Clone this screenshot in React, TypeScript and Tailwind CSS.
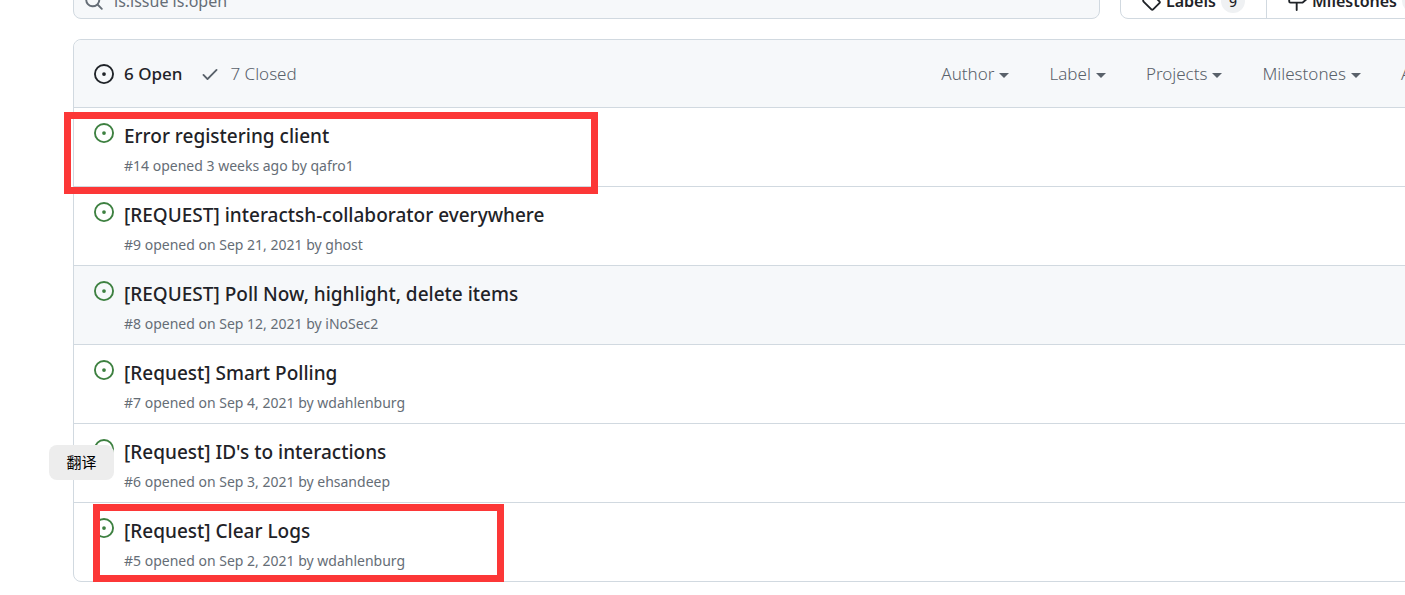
import React from 'react';

type IconProps = { path: string; className?: string };

const paths = {
  issue:
    'M8 9.5a1.5 1.5 0 1 0 0-3 1.5 1.5 0 0 0 0 3ZM8 0a8 8 0 1 1 0 16A8 8 0 0 1 8 0ZM1.5 8a6.5 6.5 0 1 0 13 0 6.5 6.5 0 0 0-13 0Z',
  check:
    'M13.78 4.22a.75.75 0 0 1 0 1.06l-7.25 7.25a.75.75 0 0 1-1.06 0L2.22 9.28a.751.751 0 0 1 .018-1.042.751.751 0 0 1 1.042-.018L6 10.94l6.72-6.72a.75.75 0 0 1 1.06 0Z',
  search:
    'M10.68 11.74a6 6 0 0 1-7.922-8.982 6 6 0 0 1 8.982 7.922l3.04 3.04a.749.749 0 0 1-.326 1.275.749.749 0 0 1-.734-.215ZM11.5 7a4.499 4.499 0 1 0-8.997 0A4.499 4.499 0 0 0 11.5 7Z',
  tag: 'M1 7.775V2.75C1 1.784 1.784 1 2.75 1h5.025c.464 0 .91.184 1.238.513l6.25 6.25a1.75 1.75 0 0 1 0 2.474l-5.026 5.026a1.75 1.75 0 0 1-2.474 0l-6.25-6.25A1.752 1.752 0 0 1 1 7.775Zm1.5 0c0 .066.026.13.073.177l6.25 6.25a.25.25 0 0 0 .354 0l5.025-5.025a.25.25 0 0 0 0-.354l-6.25-6.25a.25.25 0 0 0-.177-.073H2.75a.25.25 0 0 0-.25.25ZM6 5a1 1 0 1 1 0 2 1 1 0 0 1 0-2Z',
  milestone:
    'M7.75 0a.75.75 0 0 1 .75.75V3h3.634c.414 0 .814.147 1.13.414l2.07 1.75a1.75 1.75 0 0 1 0 2.672l-2.07 1.75a1.75 1.75 0 0 1-1.13.414H8.5v5.25a.75.75 0 0 1-1.5 0V10H2.75A1.75 1.75 0 0 1 1 8.25v-3.5C1 3.784 1.784 3 2.75 3H7V.75A.75.75 0 0 1 7.75 0Zm4.384 8.5a.25.25 0 0 0 .161-.06l2.07-1.75a.248.248 0 0 0 0-.38l-2.07-1.75a.25.25 0 0 0-.161-.06H2.75a.25.25 0 0 0-.25.25v3.5c0 .138.112.25.25.25h9.384Z',
};

function Icon({ path, className }: IconProps) {
  return (
    <svg viewBox="0 0 16 16" fill="currentColor" fillRule="evenodd" aria-hidden="true" className={className}>
      <path d={path} />
    </svg>
  );
}

function Caret() {
  return (
    <svg viewBox="0 0 10 5" fill="currentColor" aria-hidden="true" className="mt-1 h-[5px] w-[10px]">
      <path d="M0 0h10L5 5Z" />
    </svg>
  );
}

type Issue = {
  number: number;
  title: string;
  when: string;
  author: string;
  hovered?: boolean;
  mark?: string;
};

const issues: Issue[] = [
  { number: 14, title: 'Error registering client', when: '3 weeks ago', author: 'qafro1', mark: '-left-[10px] top-1 h-[82px] w-[534px]' },
  { number: 9, title: '[REQUEST] interactsh-collaborator everywhere', when: 'on Sep 21, 2021', author: 'ghost' },
  { number: 8, title: '[REQUEST] Poll Now, highlight, delete items', when: 'on Sep 12, 2021', author: 'iNoSec2', hovered: true },
  { number: 7, title: '[Request] Smart Polling', when: 'on Sep 4, 2021', author: 'wdahlenburg' },
  { number: 6, title: "[Request] ID's to interactions", when: 'on Sep 3, 2021', author: 'ehsandeep' },
  { number: 5, title: '[Request] Clear Logs', when: 'on Sep 2, 2021', author: 'wdahlenburg', mark: 'left-[19px] top-[1px] h-[78px] w-[411px]' },
];

const filters = ['Author', 'Label', 'Projects', 'Milestones', 'Assignee', 'Sort'];

function IssueRow({ issue }: { issue: Issue }) {
  return (
    <li
      className={`relative flex h-[79px] gap-[10px] border-b border-[#d1d9e0] pl-5 last:h-[78px] last:border-b-0 ${
        issue.hovered ? 'bg-[#f6f8fa]' : ''
      }`}
    >
      <Icon path={paths.issue} className="mt-[15px] size-5 shrink-0 text-[#3d8040]" />
      <div className="pt-[14px]">
        <h3 className="text-[19px] leading-7 font-medium text-[#1f2328]">
          <a href={`#issue-${issue.number}`}>{issue.title}</a>
        </h3>
        <p className="mt-1 text-[14px] leading-6 text-[#656d76]">
          #{issue.number} opened {issue.when} by <a href={`#${issue.author}`}>{issue.author}</a>
        </p>
      </div>
      {issue.mark && <span className={`pointer-events-none absolute z-10 border-[7px] border-[#fc3737] ${issue.mark}`} />}
    </li>
  );
}

export default function App() {
  return (
    <div className="relative min-h-screen overflow-hidden bg-white pl-[73px] font-['Noto_Sans','Open_Sans',sans-serif] text-[#1f2328]">
      <main className="-mt-[17px] -mr-[206px]">
        <div className="flex gap-5">
          <label className="flex h-9 flex-1 items-center gap-[10px] rounded-lg border border-[#d1d9e0] bg-[#f6f8fa] pl-[10px] text-[#656d76]">
            <Icon path={paths.search} className="size-5 shrink-0" />
            <input
              type="text"
              aria-label="Search all issues"
              defaultValue="is:issue is:open"
              className="w-full bg-transparent text-[16px] outline-none"
            />
          </label>
          <div className="flex shrink-0 gap-5 text-[16px] font-semibold">
            <nav className="flex h-9 rounded-lg border border-[#d1d9e0]">
              <a href="#labels" className="flex w-[146px] items-center gap-[5px] border-r border-[#d1d9e0] pl-5">
                <Icon path={paths.tag} className="size-5" />
                Labels
                <span className="flex h-6 min-w-6 items-center justify-center rounded-full bg-[#eff1f3] text-[14px] font-medium">9</span>
              </a>
              <a href="#milestones" className="flex w-[176px] items-center gap-[5px] pl-5">
                <Icon path={paths.milestone} className="size-5" />
                Milestones
                <span className="flex h-6 min-w-6 items-center justify-center rounded-full bg-[#eff1f3] text-[14px] font-medium">0</span>
              </a>
            </nav>
            <button type="button" className="h-9 w-[147px] rounded-lg bg-[#1f883d] text-white">
              New issue
            </button>
          </div>
        </div>

        <section className="mt-5 rounded-lg border border-[#d1d9e0]">
          <header className="flex h-[68px] items-center rounded-t-lg border-b border-[#d1d9e0] bg-[#f6f8fa] pl-5 text-[17px] font-light text-[#59616a]">
            <a href="#open" className="flex items-center gap-[10px] font-medium text-[#1f2328]">
              <Icon path={paths.issue} className="size-5" />6 Open
            </a>
            <a href="#closed" className="ml-[18px] flex items-center gap-[10px]">
              <Icon path={paths.check} className="size-5" />7 Closed
            </a>
            <div className="ml-auto flex gap-10 pr-[38px]">
              {filters.map((name) => (
                <button key={name} type="button" className="flex items-center gap-[5px]">
                  {name}
                  <Caret />
                </button>
              ))}
            </div>
          </header>
          <ul>
            {issues.map((issue) => (
              <IssueRow key={issue.number} issue={issue} />
            ))}
          </ul>
        </section>
      </main>

      <button
        type="button"
        className="absolute top-[445px] left-[49px] h-[35px] w-[65px] rounded-lg bg-[#ededed] font-['Noto_Sans_CJK_SC',sans-serif] text-[15px] text-black"
      >
        翻译
      </button>
    </div>
  );
}
